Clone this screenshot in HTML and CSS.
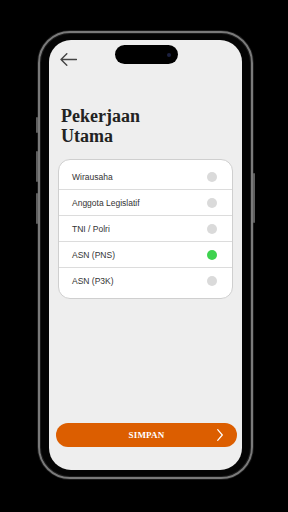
FILE: index.html
```html
<!DOCTYPE html>
<html lang="id">
<head>
  <meta charset="UTF-8" />
  <title>Pekerjaan Utama</title>
  <link rel="stylesheet" href="styles.css">
</head>
<body>
  <div class="phone">
    <span class="side-btn action"></span>
    <span class="side-btn vol-up"></span>
    <span class="side-btn vol-down"></span>
    <span class="side-btn power"></span>

    <div class="screen">
      <div class="island"><span class="camera"></span></div>

      <header class="topbar">
        <button class="back-btn" aria-label="Kembali">
          <svg width="17" height="13" viewBox="0 0 17 13">
            <path d="M16.5 6.5H1M6.8 0.7L1 6.5l5.8 5.8" fill="none" stroke="#444" stroke-width="1.4" stroke-linecap="round" stroke-linejoin="round"/>
          </svg>
        </button>
      </header>

      <h1 class="title">Pekerjaan<br>Utama</h1>

      <ul class="options">
        <li class="option"><span>Wirausaha</span><span class="radio"></span></li>
        <li class="option"><span>Anggota Legislatif</span><span class="radio"></span></li>
        <li class="option"><span>TNI / Polri</span><span class="radio"></span></li>
        <li class="option"><span>ASN (PNS)</span><span class="radio checked"></span></li>
        <li class="option"><span>ASN (P3K)</span><span class="radio"></span></li>
      </ul>

      <button class="save-btn">
        <span class="save-label">SIMPAN</span>
        <svg class="chevron" width="6" height="12" viewBox="0 0 6 12">
          <path d="M0.7 0.7L5.3 6L0.7 11.3" fill="none" stroke="#fff" stroke-width="1.2" stroke-linecap="round" stroke-linejoin="round"/>
        </svg>
      </button>
    </div>
  </div>
</body>
</html>
```

FILE: styles.css
```css
body {
  margin: 0;
  background-color: #000;
  padding-top: 31px;
  height: 481px;
  overflow: hidden;
}

.phone {
  position: relative;
  box-sizing: border-box;
  width: 215px;
  height: 448px;
  margin-left: 38px;
  padding: 7px 9px;
  border: 2px solid #7a7a7a;
  border-radius: 32px;
  background-color: #040404;
  box-shadow: inset 0 0 0 1px #1c1c1c, 0 0 0 1px #1a1a1a;
}

.side-btn {
  position: absolute;
  width: 2px;
  background-color: #5e5e5e;
  border-radius: 1px;
}

.action { left: -4px; top: 84px; height: 16px; }
.vol-up { left: -4px; top: 118px; height: 31px; }
.vol-down { left: -4px; top: 160px; height: 31px; }
.power { right: -4px; top: 140px; height: 50px; }

.screen {
  position: relative;
  box-sizing: border-box;
  height: 430px;
  padding: 0 9px 23px;
  border-radius: 22px;
  background-color: #eeeeee;
  display: flex;
  flex-direction: column;
}

.island {
  position: absolute;
  top: 5px;
  left: 66px;
  width: 63px;
  height: 19px;
  border-radius: 10px;
  background-color: #000;
}

.camera {
  position: absolute;
  top: 8px;
  left: 52px;
  width: 4px;
  height: 4px;
  border-radius: 50%;
  background-color: #1c2140;
}

.topbar {
  padding-top: 13px;
  height: 13px;
}

.back-btn {
  display: block;
  margin-left: 2px;
  padding: 0;
  border: none;
  background: none;
  line-height: 0;
}

.title {
  margin: 40px 0 0 3px;
  font-family: "Liberation Serif", serif;
  font-weight: bold;
  font-size: 18px;
  line-height: 20px;
  color: #222;
}

.options {
  list-style: none;
  margin: 13px 0 0;
  padding: 4px 0 5px;
  background-color: #fff;
  border: 1px solid #cfcfcf;
  border-radius: 12px;
}

.option {
  display: flex;
  align-items: center;
  justify-content: space-between;
  height: 25px;
  padding: 0 15px 0 13px;
  border-bottom: 1px solid #dcdcdc;
  font-family: "Liberation Sans", Arial, sans-serif;
  font-size: 8.5px;
  color: #333;
}

.option:last-child {
  border-bottom: none;
}

.radio {
  width: 10px;
  height: 10px;
  border-radius: 50%;
  background-color: #dadada;
}

.radio.checked {
  background-color: #3ed24f;
}

.save-btn {
  margin: auto -4px 0 -2px;
  height: 24px;
  padding: 0 14px;
  border: none;
  border-radius: 12px;
  background-color: #dc5e00;
  display: grid;
  grid-template-columns: 1fr auto 1fr;
  align-items: center;
}

.save-label {
  grid-column: 2;
  font-family: "Liberation Serif", serif;
  font-weight: bold;
  font-size: 9px;
  letter-spacing: 0.2px;
  color: #fff;
}

.chevron {
  grid-column: 3;
  justify-self: end;
}
```
